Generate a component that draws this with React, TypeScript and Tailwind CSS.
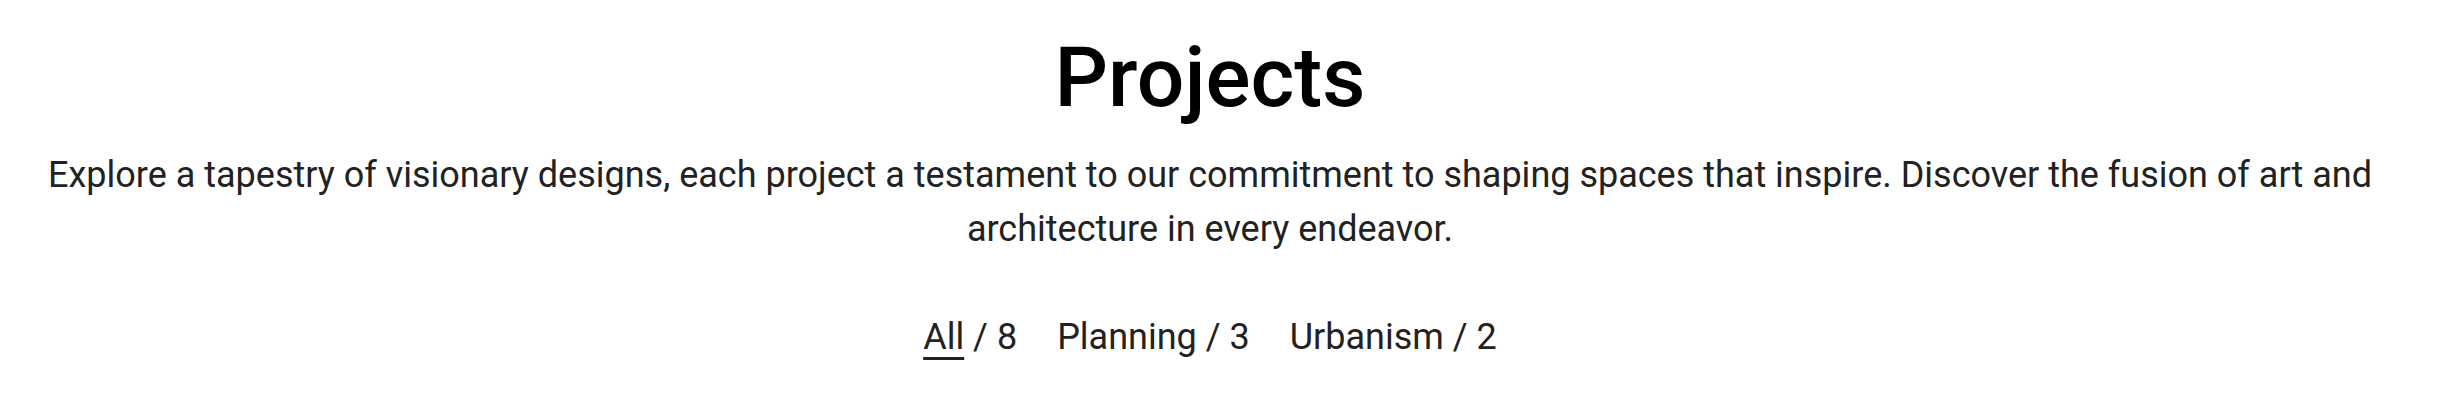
import React, { useState } from 'react';

const filters = [
	{ name: 'All', count: 8 },
	{ name: 'Planning', count: 3 },
	{ name: 'Urbanism', count: 2 },
];

export default function App() {
	const [active, setActive] = useState('All');

	return (
		<div className="min-h-[408px] w-full bg-white font-['Roboto',sans-serif]">
			<section className="pl-[10px] pr-[36px] pt-[36px] text-center">
				{/* タイトル */}
				<h1 className="text-[84px] leading-none font-medium text-black">Projects</h1>
				<p className="mt-[28px] text-[36px] leading-[54px] text-[#222222]">
					Explore a tapestry of visionary designs, each project a testament to our commitment to shaping spaces that inspire. Discover the fusion of art and architecture in every endeavor.
				</p>
				{/* フィルター */}
				<div className="mt-[54px] flex justify-center gap-[40px] text-[36px] leading-[54px] text-[#222222]">
					{filters.map((f) => (
						<button key={f.name} onClick={() => setActive(f.name)} className="cursor-pointer">
							<span className={active === f.name ? 'underline decoration-[3px] underline-offset-[8px]' : ''}>{f.name}</span>
							<span> / {f.count}</span>
						</button>
					))}
				</div>
			</section>
		</div>
	);
}
